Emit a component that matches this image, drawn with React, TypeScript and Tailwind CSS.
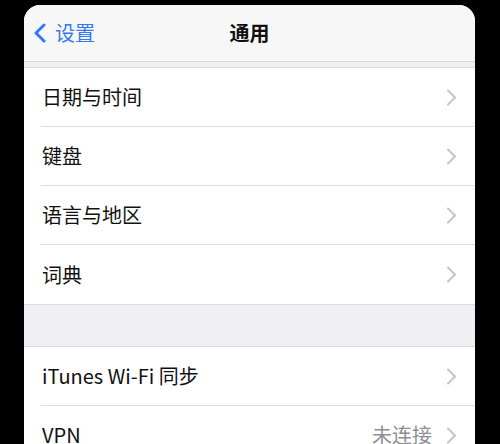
const Chevron = () => (
	<svg width="11" height="17" viewBox="0 0 11 17" fill="none" className="shrink-0">
		<path d="M2 1.5 L9 8.5 L2 15.5" stroke="#c5c5c8" strokeWidth="2" strokeLinecap="round" strokeLinejoin="round" />
	</svg>
);

type RowProps = {
	label: string;
	detail?: string;
	last?: boolean;
};

const Row = ({ label, detail, last }: RowProps) => (
	<div className="flex h-[59px] items-stretch bg-white pl-[17px]">
		<div
			className={`flex flex-1 items-center pr-[18px] ${
				last ? '' : 'border-b border-[#dcdcdf]'
			}`}
		>
			<span className="flex-1 pl-[1px] text-[20px] text-[#111]">{label}</span>
			{detail && <span className="mr-[14px] text-[20px] text-[#8e8e93]">{detail}</span>}
			<Chevron />
		</div>
	</div>
);

export default function App() {
	return (
		<div
			className="h-[444px] w-[500px] overflow-hidden bg-black pl-[24px] pr-[25px] pt-[5px]"
			style={{ fontFamily: '"Noto Sans CJK SC", "Noto Sans", sans-serif' }}
		>
			<div className="h-full overflow-hidden rounded-t-[16px] bg-[#efeff4]">
				<div className="relative flex h-[56px] items-center bg-[#f7f7f8]">
					<div className="flex items-center pl-[9px] text-[#3478f6]">
						<svg width="14" height="20" viewBox="0 0 14 20" fill="none">
							<path d="M11 2 L3 10 L11 18" stroke="#3478f6" strokeWidth="3" strokeLinecap="round" strokeLinejoin="round" />
						</svg>
						<span className="ml-[8px] text-[20px]">设置</span>
					</div>
					<span className="absolute left-1/2 -translate-x-1/2 text-[20px] font-bold text-[#111]">通用</span>
				</div>
				<div className="h-[6px] border-t border-[#d6d6da] bg-[#efeff4]" />
				<div className="border-t border-[#dcdcdf]">
					<Row label="日期与时间" />
					<Row label="键盘" />
					<Row label="语言与地区" />
					<Row label="词典" last />
				</div>
				<div className="h-[43px] border-y border-[#dcdcdf] bg-[#efeff4]" />
				<div>
					<Row label="iTunes Wi-Fi 同步" />
					<Row label="VPN" detail="未连接" />
				</div>
			</div>
		</div>
	);
}
